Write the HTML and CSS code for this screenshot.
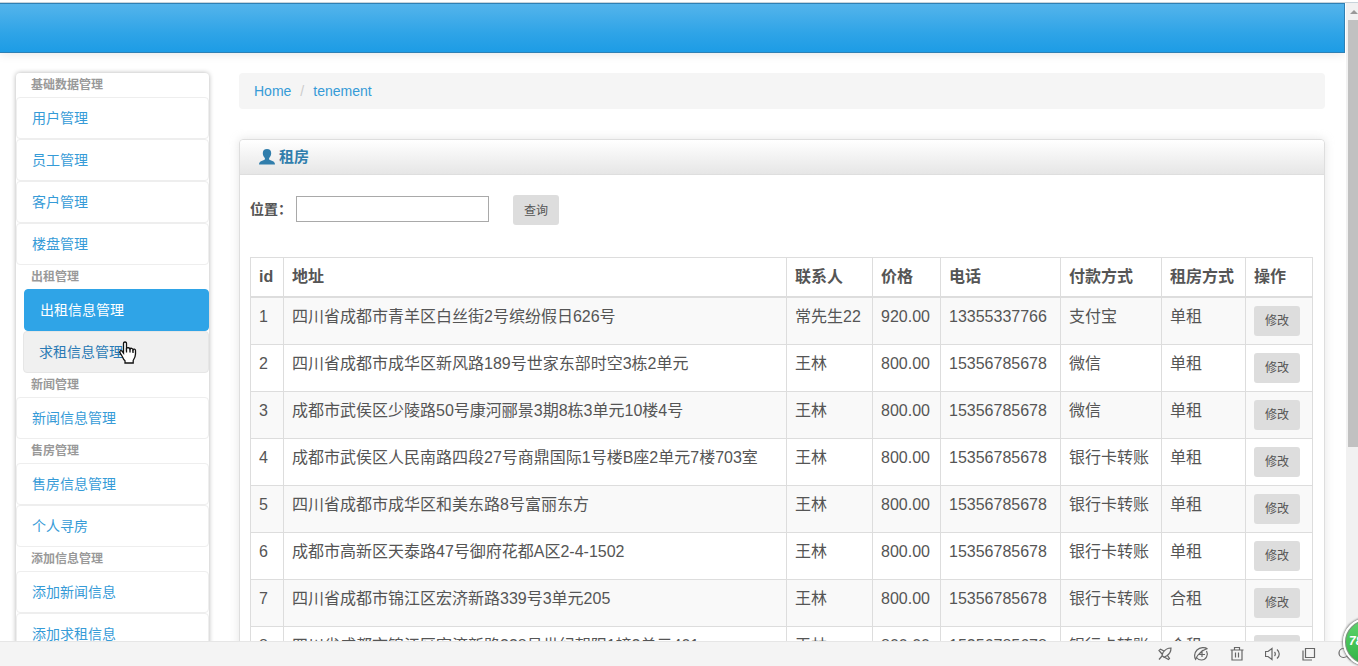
FILE: index.html
```html
<!DOCTYPE html>
<html lang="zh-CN">
<head>
<meta charset="utf-8">
<meta name="viewport" content="width=device-width, initial-scale=1">
<title>租房</title>
<link rel="stylesheet" href="styles.css">
</head>
<body>
<div class="window">
  <div class="viewport">
    <div class="page">
      <header class="navbar"></header>
      <div class="layout">
        <nav class="sidebar">
          <h2 class="nav-header">基础数据管理</h2>
          <a class="nav-item" href="#">用户管理</a>
          <a class="nav-item" href="#">员工管理</a>
          <a class="nav-item" href="#">客户管理</a>
          <a class="nav-item" href="#">楼盘管理</a>
          <h2 class="nav-header">出租管理</h2>
          <a class="nav-item active" href="#">出租信息管理</a>
          <a class="nav-item hovered" href="#">求租信息管理</a>
          <h2 class="nav-header">新闻管理</h2>
          <a class="nav-item" href="#">新闻信息管理</a>
          <h2 class="nav-header">售房管理</h2>
          <a class="nav-item" href="#">售房信息管理</a>
          <a class="nav-item" href="#">个人寻房</a>
          <h2 class="nav-header">添加信息管理</h2>
          <a class="nav-item" href="#">添加新闻信息</a>
          <a class="nav-item" href="#">添加求租信息</a>
        </nav>
        <main class="content">
          <ol class="breadcrumb">
            <li><a href="#">Home</a></li>
            <li><a href="#">tenement</a></li>
          </ol>
          <section class="box">
            <h1 class="box-header">
              <svg class="user-icon" viewBox="0 0 16 16" aria-hidden="true"><path d="M8 0C5.400 0 3.700 1.600 3.800 4.200C3.900 6.200 4.700 7.800 5.800 8.900C6.200 9.900 5.900 10.500 5 10.900L2 12.200C0.800 12.800 0.100 13.600 0 15.500H16C15.900 13.600 15.200 12.800 14 12.200L11 10.900C10.100 10.500 9.800 9.900 10.200 8.900C11.300 7.800 12.100 6.200 12.200 4.200C12.300 1.600 10.600 0 8 0Z"/></svg>
              <span>租房</span>
            </h1>
            <div class="box-content">
              <form class="search">
                <label for="location">位置：</label>
                <input id="location" class="search-input" type="text">
                <button class="btn" type="button">查询</button>
              </form>
              <table class="listing">
                <colgroup>
                  <col class="col-id"><col><col class="col-contact"><col class="col-price"><col class="col-phone"><col class="col-pay"><col class="col-kind"><col class="col-action">
                </colgroup>
                <thead>
                  <tr><th>id</th><th>地址</th><th>联系人</th><th>价格</th><th>电话</th><th>付款方式</th><th>租房方式</th><th>操作</th></tr>
                </thead>
                <tbody>
                  <tr><td>1</td><td>四川省成都市青羊区白丝街2号缤纷假日626号</td><td>常先生22</td><td>920.00</td><td>13355337766</td><td>支付宝</td><td>单租</td><td><button class="btn" type="button">修改</button></td></tr>
                  <tr><td>2</td><td>四川省成都市成华区新风路189号世家东部时空3栋2单元</td><td>王林</td><td>800.00</td><td>15356785678</td><td>微信</td><td>单租</td><td><button class="btn" type="button">修改</button></td></tr>
                  <tr><td>3</td><td>成都市武侯区少陵路50号康河郦景3期8栋3单元10楼4号</td><td>王林</td><td>800.00</td><td>15356785678</td><td>微信</td><td>单租</td><td><button class="btn" type="button">修改</button></td></tr>
                  <tr><td>4</td><td>成都市武侯区人民南路四段27号商鼎国际1号楼B座2单元7楼703室</td><td>王林</td><td>800.00</td><td>15356785678</td><td>银行卡转账</td><td>单租</td><td><button class="btn" type="button">修改</button></td></tr>
                  <tr><td>5</td><td>四川省成都市成华区和美东路8号富丽东方</td><td>王林</td><td>800.00</td><td>15356785678</td><td>银行卡转账</td><td>单租</td><td><button class="btn" type="button">修改</button></td></tr>
                  <tr><td>6</td><td>成都市高新区天泰路47号御府花都A区2-4-1502</td><td>王林</td><td>800.00</td><td>15356785678</td><td>银行卡转账</td><td>单租</td><td><button class="btn" type="button">修改</button></td></tr>
                  <tr><td>7</td><td>四川省成都市锦江区宏济新路339号3单元205</td><td>王林</td><td>800.00</td><td>15356785678</td><td>银行卡转账</td><td>合租</td><td><button class="btn" type="button">修改</button></td></tr>
                  <tr><td>8</td><td>四川省成都市锦江区宏济新路338号世纪朝阳1幢2单元401</td><td>王林</td><td>800.00</td><td>15356785678</td><td>银行卡转账</td><td>合租</td><td><button class="btn" type="button">修改</button></td></tr>
                </tbody>
              </table>
            </div>
          </section>
        </main>
      </div>
    </div>
    <div class="scroll-rail">
      <svg class="scroll-arrow" viewBox="0 0 10 17" aria-hidden="true"><path d="M2 11L6 7L10 11Z"/></svg>
      <div class="scroll-thumb"></div>
    </div>
  </div>
  <footer class="statusbar">
    <button class="tool" type="button" aria-label="加速">
      <svg viewBox="0 0 16 16"><path d="M14 2C10.500 2 8 3.500 6 6.500L5 9.500L7 11.200L9.800 9.800C12.500 8 14 5.500 14 2ZM7 5L3.500 3.200L2 4.500L5 8M10.500 9.500L12.500 12.500L11.500 13.500L7.500 11.300M5 10L2 13.500"/></svg>
    </button>
    <button class="tool" type="button" aria-label="兼容模式">
      <svg viewBox="0 0 16 16"><path d="M14.500 3C12 1 7 1.200 4 4C1 7 1 12 3 14M2.500 13C4.500 9 8.500 4.500 14.300 2.500M13.500 5C15.800 9 13 14 8.500 14C6.200 14 4.500 13 3.500 11.500M9 11V5L5.700 8.500H12"/></svg>
    </button>
    <button class="tool" type="button" aria-label="清理">
      <svg viewBox="0 0 16 16"><path d="M1.500 4H14.500M5.500 4V1.500H10.500V4M3 4V14H13V4M6.500 6.500V11.500M9.500 6.500V11.500"/></svg>
    </button>
    <button class="tool" type="button" aria-label="声音">
      <svg viewBox="0 0 16 16"><path d="M0.500 5.500H3L7 2.500V13.500L3 10.500H0.500ZM9.500 6C10.500 7.200 10.500 8.800 9.500 10M12 3.500C15 6.200 15 9.800 12 12.500"/></svg>
    </button>
    <button class="tool" type="button" aria-label="窗口">
      <svg viewBox="0 0 16 16"><path d="M4.500 2.500H13.500V11.500H4.500ZM2 4.500V14H11"/></svg>
    </button>
    <button class="tool" type="button" aria-label="缩放">
      <svg viewBox="0 0 16 16"><circle cx="6.500" cy="7" r="4.500"/><path d="M9.800 10.200L14 14"/></svg>
    </button>
  </footer>
  <div class="meter">78</div>
  <svg class="pointer" viewBox="0 0 18 23" aria-hidden="true"><path d="M6 1C4.800 1 4.500 1.800 4.500 2.500V12L3 10C2.200 9.200 0.800 9.600 0.800 10.800C1 12.500 2.500 14 3.500 16C4.300 18 5 19 6 19.800V22H14.200V19.500C15.500 17.500 16.500 15.500 16.500 13V9.500C16.500 8 14.500 7.700 14 8.800C13.800 7 11.500 6.800 11 8C10.500 6.500 8.200 6.300 7.500 7.500V2.500C7.500 1.800 7.200 1 6 1Z"/><path d="M7.500 7V11.500M11 8V11.500M14 8.800V12"/></svg>
</div>
</body>
</html>
```

FILE: styles.css
```css
* {
  box-sizing: border-box;
}

body {
  margin: 0;
  background: #fff;
  color: #555;
  font-family: "Liberation Sans", "Noto Sans CJK SC", sans-serif;
  font-size: 14px;
  line-height: 20px;
}

a {
  color: #369bd7;
  text-decoration: none;
}

.window {
  position: relative;
  display: flex;
  flex-direction: column;
  height: 100vh;
  overflow: hidden;
}

.viewport {
  display: flex;
  flex: 1;
  min-height: 0;
  margin-top: 2px;
  border-top: 1px solid #c8d3da;
}

.page {
  flex: 1;
  min-width: 0;
  overflow: hidden;
}

.navbar {
  height: 50px;
  border: 1px solid #2f80b4;
  border-left: 0;
  background: linear-gradient(#54b4eb, #2fa4e7 60%, #1d9ce5);
  box-shadow: 0 1px 10px rgba(0, 0, 0, 0.1);
}

.layout {
  display: flex;
  align-items: flex-start;
  gap: 30px;
  padding: 20px 20px 0 16px;
}

.sidebar {
  display: flex;
  flex: none;
  flex-direction: column;
  width: 193px;
  border-radius: 4px;
  box-shadow: 0 0 5px rgba(0, 0, 0, 0.3);
}

.nav-header {
  height: 24px;
  margin: 0;
  padding: 0 15px;
  color: #999;
  font-size: 12px;
  line-height: 24px;
}

.nav-item {
  padding: 10px 15px;
  border: 1px solid #eee;
  border-radius: 4px;
}

.nav-item.active {
  margin-left: 8px;
  border-color: #2fa4e7;
  background: #2fa4e7;
  color: #fff;
}

.nav-item.hovered {
  margin-left: 7px;
  border-color: #e6e6e6;
  background: #f0f0f0;
  color: #2a7ab5;
}

.content {
  flex: 1;
  min-width: 0;
}

.breadcrumb {
  display: flex;
  margin: 0 0 30px;
  padding: 8px 15px;
  border-radius: 4px;
  background: #f5f5f5;
  list-style: none;
}

.breadcrumb li + li::before {
  padding: 0 9px;
  color: #ccc;
  content: "/";
}

.box {
  border: 1px solid #dedede;
  border-radius: 4px;
  box-shadow: 0 0 10px rgba(189, 189, 189, 0.4);
}

.box-header {
  display: flex;
  align-items: center;
  gap: 4px;
  height: 35px;
  margin: 0;
  padding: 0 19px;
  border-bottom: 1px solid #dedede;
  border-radius: 4px 4px 0 0;
  background: linear-gradient(#fff, #e6e6e6);
  color: #317eac;
  font-size: 15px;
}

.user-icon {
  width: 16px;
  height: 16px;
  fill: #317eac;
}

.box-content {
  padding: 20px 11px 10px 10px;
}

.search {
  display: flex;
  align-items: flex-start;
  margin-bottom: 32px;
}

.search label {
  font-family: "Liberation Sans", "Noto Sans CJK TC", sans-serif;
  font-weight: bold;
  line-height: 28px;
}

.search-input {
  width: 193px;
  height: 26px;
  margin: 1px 24px 0 4px;
  padding: 2px;
  border: 1px solid #a9a9a9;
  font: inherit;
}

.btn {
  display: block;
  width: 46px;
  height: 30px;
  padding: 0 0 2px;
  border: 0;
  border-radius: 3px;
  background: #ddd;
  color: #555;
  font-family: inherit;
  font-size: 12px;
}

.listing {
  width: 100%;
  border-collapse: collapse;
  table-layout: fixed;
  font-size: 16px;
  line-height: 22px;
}

.listing th,
.listing td {
  height: 47px;
  padding: 8px;
  border: 1px solid #ddd;
  text-align: left;
  vertical-align: top;
  white-space: nowrap;
}

.listing th {
  height: 39px;
  padding-bottom: 7px;
  border-bottom-width: 2px;
}

.listing tbody tr:nth-child(odd) {
  background: #f9f9f9;
}

.col-id {
  width: 33px;
}

.col-contact {
  width: 86px;
}

.col-price {
  width: 68px;
}

.col-phone {
  width: 120px;
}

.col-pay {
  width: 101px;
}

.col-kind {
  width: 84px;
}

.col-action {
  width: 67px;
}

.scroll-rail {
  display: flex;
  flex: none;
  flex-direction: column;
  width: 12px;
  margin-left: 1px;
  padding-left: 2px;
  background: #f1f1f1;
}

.scroll-arrow {
  width: 10px;
  height: 17px;
  fill: #999;
}

.scroll-thumb {
  height: 67%;
  background: #c1c1c1;
}

.statusbar {
  display: flex;
  flex: none;
  align-items: center;
  justify-content: flex-end;
  gap: 20px;
  height: 25px;
  padding-right: 5px;
  border-top: 1px solid #e6e6e6;
  background: #f4f4f4;
}

.tool {
  width: 16px;
  height: 16px;
  padding: 0;
  border: 0;
  background: none;
}

.tool svg {
  display: block;
  fill: none;
  stroke: #666;
  stroke-width: 1.2;
}

.meter {
  position: absolute;
  right: -33px;
  bottom: 0;
  width: 48px;
  height: 48px;
  padding-left: 4px;
  border: 2px solid #fff;
  border-radius: 50%;
  background: linear-gradient(#5fd46c, #2fb344);
  box-shadow: 0 0 0 1px #888 inset, 0 0 2px 1px #888;
  color: #fff;
  font-size: 12px;
  font-style: italic;
  font-weight: bold;
  line-height: 42px;
}

.pointer {
  position: absolute;
  top: 341px;
  left: 119px;
  width: 18px;
  height: 23px;
  fill: #fff;
  stroke: #111;
  stroke-width: 1.3;
}
```
